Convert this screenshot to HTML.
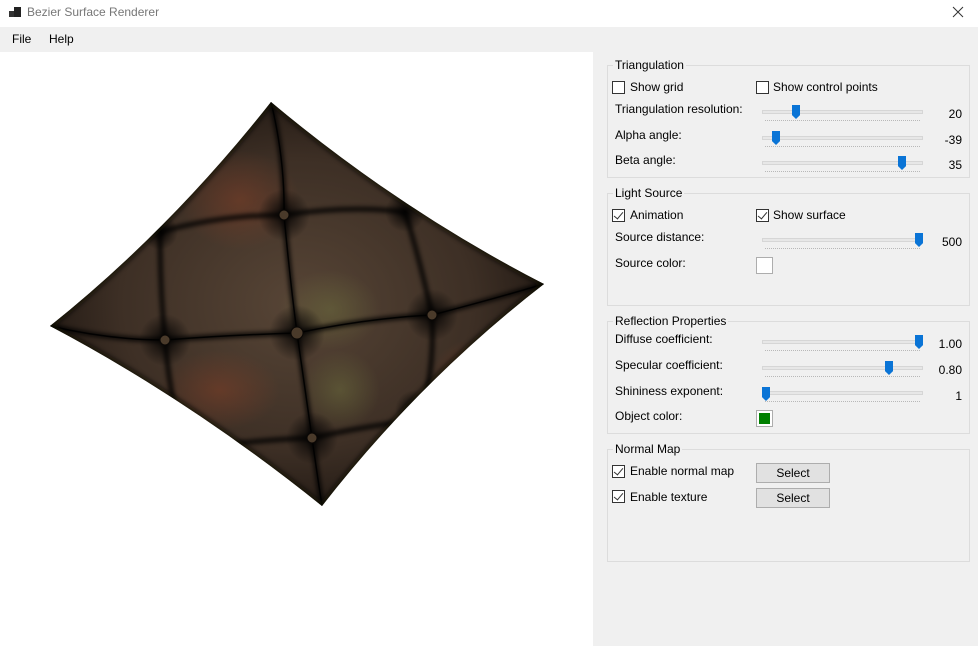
<!DOCTYPE html>
<html><head><meta charset="utf-8"><style>
*{margin:0;padding:0;box-sizing:border-box}
body{width:978px;height:646px;overflow:hidden;background:#fff;font-family:"Segoe UI","Liberation Sans",sans-serif;font-size:12px;color:#000;position:relative}
.abs{position:absolute}
.title{left:0;top:0;width:978px;height:27px;background:#fff}
.menu{left:0;top:27px;width:978px;height:25px;background:#f0f0f0}
.panel{left:593px;top:52px;width:385px;height:594px;background:#f0f0f0}
.gb{position:absolute;border:1px solid #dcdcdc;left:607px;width:363px}
.gbt{position:absolute;background:#f0f0f0;padding:0 2px;left:613px;font-size:12px;color:#000}
.cb{position:absolute;width:13px;height:13px;border:1px solid #333;background:#fff}
.cb.c::after{content:"";position:absolute;left:3px;top:0px;width:4px;height:8px;border:solid #333;border-width:0 1px 1px 0;transform:rotate(40deg)}
.lbl{position:absolute;font-size:12px}
.track{position:absolute;left:762px;width:161px;height:4px;background:#e7e7e7;border:1px solid #d6d6d6}
.ticks{position:absolute;left:765px;width:155px;height:2px;border-top:1px dotted #b8b8b8}
.thumb{position:absolute;width:8px;height:14px;background:#0a74d6;clip-path:polygon(0 0,100% 0,100% 72%,50% 100%,0 72%)}
.val{position:absolute;right:16px;font-size:12px;text-align:right}
.sw{position:absolute;width:17px;height:17px;border:1px solid #adadad;background:#fff}
.btn{position:absolute;left:756px;width:74px;height:20px;background:#e1e1e1;border:1px solid #adadad;text-align:center;line-height:18px}
</style></head><body>
<div class="abs title"></div>
<div class="abs" style="left:9px;top:11px;width:5px;height:6px;background:#333"></div>
<div class="abs" style="left:14px;top:7px;width:7px;height:10px;background:#222"></div>
<div class="abs" style="left:27px;top:5px;color:#777;font-size:12px">Bezier Surface Renderer</div>
<svg class="abs" style="left:952px;top:6px" width="12" height="12"><path d="M1,1L11,11M11,1L1,11" stroke="#333" stroke-width="1"/></svg>
<div class="abs menu"></div>
<div class="abs" style="left:12px;top:32px">File</div>
<div class="abs" style="left:49px;top:32px">Help</div>

<svg class="abs" style="left:0;top:52px" width="593" height="594" viewBox="0 52 593 594">
<defs>
<radialGradient id="g1" cx="0.5" cy="0.5" r="0.6">
<stop offset="0" stop-color="#574536"/><stop offset="0.6" stop-color="#3d2f25"/><stop offset="1" stop-color="#16100c"/></radialGradient>
<radialGradient id="sp" cx="0.5" cy="0.5" r="0.5"><stop offset="0" stop-color="#000" stop-opacity="0.9"/><stop offset="1" stop-color="#000" stop-opacity="0"/></radialGradient>
<radialGradient id="rd" cx="0.5" cy="0.5" r="0.5"><stop offset="0" stop-color="#7a3e28" stop-opacity="0.6"/><stop offset="1" stop-color="#7a3e28" stop-opacity="0"/></radialGradient>
<radialGradient id="gr" cx="0.5" cy="0.5" r="0.5"><stop offset="0" stop-color="#6a6a3c" stop-opacity="0.55"/><stop offset="1" stop-color="#6a6a3c" stop-opacity="0"/></radialGradient>
<filter id="bl"><feGaussianBlur stdDeviation="2"/></filter>
<clipPath id="cp"><path d="M271,102 Q400,210 544,284 Q420,380 322,506 Q190,400 50,326 Q170,230 271,102Z"/></clipPath>
</defs>
<path d="M271,102 Q400,210 544,284 Q420,380 322,506 Q190,400 50,326 Q170,230 271,102Z" fill="url(#g1)"/>
<g clip-path="url(#cp)">
<ellipse cx="240" cy="200" rx="60" ry="50" fill="url(#rd)"/>
<ellipse cx="220" cy="390" rx="60" ry="40" fill="url(#rd)"/>
<ellipse cx="330" cy="310" rx="50" ry="40" fill="url(#gr)"/>
<ellipse cx="340" cy="390" rx="40" ry="40" fill="url(#gr)"/>
<ellipse cx="470" cy="380" rx="40" ry="40" fill="url(#rd)"/>
<g stroke="#000" stroke-width="5" fill="none" opacity="0.8" filter="url(#bl)">
<path d="M271,102 Q285,160 284,215 Q290,280 297,333 Q305,390 312,438 Q318,480 322,506"/>
<path d="M160,232 Q160,290 165,340 Q170,400 185,450"/>
<path d="M405,212 Q420,260 432,315 Q435,370 420,420"/>
<path d="M50,326 Q110,340 165,340 Q230,335 297,333 Q370,318 432,315 Q490,300 544,284"/>
<path d="M160,232 Q220,215 284,215 Q350,205 405,212"/>
<path d="M185,450 Q250,440 312,438 Q370,425 420,420"/>
</g>
<g stroke="#000" stroke-width="1.5" fill="none" opacity="0.9">
<path d="M271,102 Q285,160 284,215 Q290,280 297,333 Q305,390 312,438 Q318,480 322,506"/>
<path d="M50,326 Q110,340 165,340 Q230,335 297,333 Q370,318 432,315 Q490,300 544,284"/>
</g>
<g fill="url(#sp)">
<circle cx="284" cy="215" r="26"/><circle cx="165" cy="340" r="26"/><circle cx="297" cy="333" r="28"/>
<circle cx="432" cy="315" r="26"/><circle cx="312" cy="438" r="26"/><circle cx="160" cy="232" r="18"/>
<circle cx="405" cy="212" r="20"/><circle cx="415" cy="410" r="20"/><circle cx="190" cy="440" r="20"/>
</g>
<g fill="#4a3a2a" stroke="#0a0705" stroke-width="1">
<circle cx="284" cy="215" r="5"/><circle cx="165" cy="340" r="5"/><circle cx="297" cy="333" r="6"/>
<circle cx="432" cy="315" r="5"/><circle cx="312" cy="438" r="5"/>
</g>
<path d="M271,102 Q400,210 544,284 Q420,380 322,506 Q190,400 50,326 Q170,230 271,102Z" fill="none" stroke="#0c0806" stroke-width="6" opacity="0.7" filter="url(#bl)"/>
</g>
</svg>

<div class="abs panel"></div>

<div class="gb" style="top:65px;height:113px"></div><div class="gbt" style="top:58px">Triangulation</div>
<div class="cb" style="left:612px;top:81px"></div><div class="lbl" style="left:630px;top:80px">Show grid</div>
<div class="cb" style="left:756px;top:81px"></div><div class="lbl" style="left:773px;top:80px">Show control points</div>
<div class="lbl" style="left:615px;top:102px">Triangulation resolution:</div>
<div class="track" style="top:110px"></div><div class="ticks" style="top:120px"></div><div class="thumb" style="left:792px;top:105px"></div><div class="val" style="top:107px">20</div>
<div class="lbl" style="left:615px;top:128px">Alpha angle:</div>
<div class="track" style="top:136px"></div><div class="ticks" style="top:146px"></div><div class="thumb" style="left:772px;top:131px"></div><div class="val" style="top:133px">-39</div>
<div class="lbl" style="left:615px;top:153px">Beta angle:</div>
<div class="track" style="top:161px"></div><div class="ticks" style="top:171px"></div><div class="thumb" style="left:898px;top:156px"></div><div class="val" style="top:158px">35</div>

<div class="gb" style="top:193px;height:113px"></div><div class="gbt" style="top:186px">Light Source</div>
<div class="cb c" style="left:612px;top:209px"></div><div class="lbl" style="left:630px;top:208px">Animation</div>
<div class="cb c" style="left:756px;top:209px"></div><div class="lbl" style="left:773px;top:208px">Show surface</div>
<div class="lbl" style="left:615px;top:230px">Source distance:</div>
<div class="track" style="top:238px"></div><div class="ticks" style="top:248px"></div><div class="thumb" style="left:915px;top:233px"></div><div class="val" style="top:235px">500</div>
<div class="lbl" style="left:615px;top:256px">Source color:</div>
<div class="sw" style="left:756px;top:257px"></div>

<div class="gb" style="top:321px;height:113px"></div><div class="gbt" style="top:314px">Reflection Properties</div>
<div class="lbl" style="left:615px;top:332px">Diffuse coefficient:</div>
<div class="track" style="top:340px"></div><div class="ticks" style="top:350px"></div><div class="thumb" style="left:915px;top:335px"></div><div class="val" style="top:337px">1.00</div>
<div class="lbl" style="left:615px;top:358px">Specular coefficient:</div>
<div class="track" style="top:366px"></div><div class="ticks" style="top:376px"></div><div class="thumb" style="left:885px;top:361px"></div><div class="val" style="top:363px">0.80</div>
<div class="lbl" style="left:615px;top:384px">Shininess exponent:</div>
<div class="track" style="top:391px"></div><div class="ticks" style="top:401px"></div><div class="thumb" style="left:762px;top:387px"></div><div class="val" style="top:389px">1</div>
<div class="lbl" style="left:615px;top:409px">Object color:</div>
<div class="sw" style="left:756px;top:410px;padding:2px"><div style="width:11px;height:11px;background:#008000"></div></div>

<div class="gb" style="top:449px;height:113px"></div><div class="gbt" style="top:442px">Normal Map</div>
<div class="cb c" style="left:612px;top:465px"></div><div class="lbl" style="left:630px;top:464px">Enable normal map</div>
<div class="btn" style="top:463px">Select</div>
<div class="cb c" style="left:612px;top:490px"></div><div class="lbl" style="left:630px;top:490px">Enable texture</div>
<div class="btn" style="top:488px">Select</div>
</body></html>
